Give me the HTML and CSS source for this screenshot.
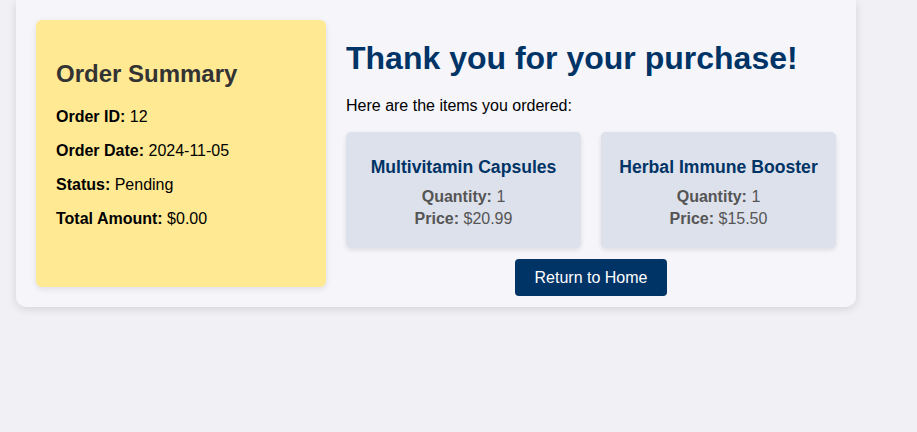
FILE: index.html
```html
<!DOCTYPE html>
<html lang="en">
<head>
<meta charset="utf-8">
<title>Order Confirmation</title>
<link rel="stylesheet" href="styles.css">
</head>
<body>
<div class="container">
  <aside class="summary">
    <h2>Order Summary</h2>
    <p><strong>Order ID:</strong> 12</p>
    <p><strong>Order Date:</strong> 2024-11-05</p>
    <p><strong>Status:</strong> Pending</p>
    <p><strong>Total Amount:</strong> $0.00</p>
  </aside>
  <main class="details">
    <h1>Thank you for your purchase!</h1>
    <p class="intro">Here are the items you ordered:</p>
    <div class="items">
      <div class="item">
        <h3>Multivitamin Capsules</h3>
        <p><strong>Quantity:</strong> 1</p>
        <p><strong>Price:</strong> $20.99</p>
      </div>
      <div class="item">
        <h3>Herbal Immune Booster</h3>
        <p><strong>Quantity:</strong> 1</p>
        <p><strong>Price:</strong> $15.50</p>
      </div>
    </div>
    <div class="actions">
      <a class="btn" href="#">Return to Home</a>
    </div>
  </main>
</div>
</body>
</html>
```
FILE: styles.css
```css
* { box-sizing: border-box; }
html, body { height: 100%; }
body {
  margin: 0;
  padding: 0 16px;
  background: #f0f0f5;
  font-family: "Liberation Sans", Arial, sans-serif;
  font-size: 16px;
  color: #000;
}
.container {
  width: 840px;
  display: flex;
  align-items: flex-start;
  gap: 20px;
  padding: 20px 20px 11px;
  background: #f5f5fa;
  border-radius: 0 0 10px 10px;
  box-shadow: 0 2px 10px rgba(0, 0, 0, 0.12);
}
.summary {
  width: 290px;
  height: 267px;
  flex: none;
  padding: 20px 20px;
  background: #ffe993;
  border-radius: 6px;
  box-shadow: 0 2px 6px rgba(0, 0, 0, 0.1);
}
.summary h2 {
  margin: 20px 0;
  font-size: 24px;
  color: #333;
}
.summary p { margin: 16px 0; }
.details { flex: 1; }
.details h1 {
  margin: 20px 0;
  font-size: 32px;
  color: #003366;
}
.intro { margin: 0 0 17px; }
.items {
  display: grid;
  grid-template-columns: 1fr 1fr;
  gap: 20px;
}
.item {
  padding: 20px 10px;
  background: #dde1eb;
  border-radius: 5px;
  text-align: center;
  color: #555;
  box-shadow: 0 2px 5px rgba(0, 0, 0, 0.1);
}
.item h3 {
  margin: 5px 0 10px;
  font-size: 17.6px;
  color: #003366;
}
.item p { margin: 0; }
.item p + p { margin-top: 4px; }
.actions {
  display: flex;
  justify-content: center;
  margin-top: 11px;
}
.btn {
  display: inline-block;
  padding: 9px 20px;
  background: #003366;
  color: #fff;
  text-decoration: none;
  border-radius: 4px;
  line-height: 19px;
}
```
